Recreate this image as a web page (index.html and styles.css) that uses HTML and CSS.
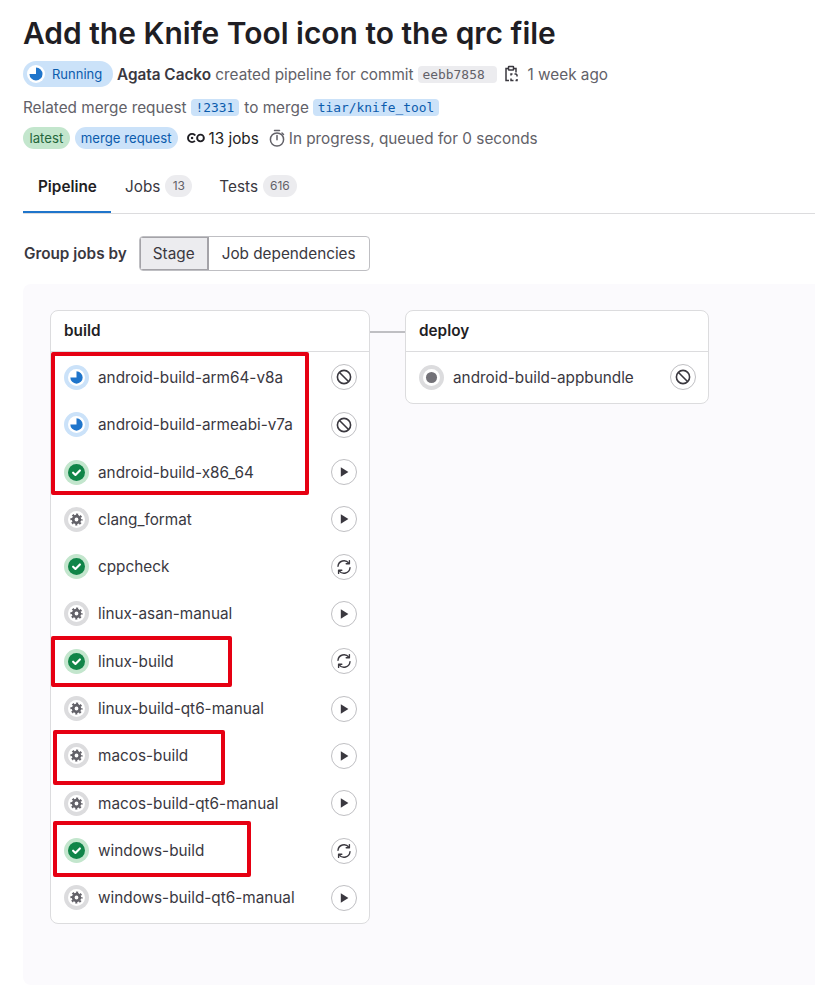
FILE: index.html
```html
<!DOCTYPE html>
<html lang="en">
<head>
<meta charset="utf-8">
<title>Pipeline</title>
<link rel="stylesheet" href="styles.css">
</head>
<body>
<svg class="defs" width="0" height="0" aria-hidden="true">
  <symbol id="s-running" viewBox="0 0 16 16"><circle cx="8" cy="8" r="8" fill="#fff"/><path d="M8 2.200a5.800 5.800 0 1 1-5.800 5.800H8z" fill="#1f75cb"/></symbol>
  <symbol id="s-success" viewBox="0 0 16 16"><circle cx="8" cy="8" r="8" fill="#108548"/><path d="M4.800 8.200l2.200 2.100 4.200-4.200" fill="none" stroke="#fff" stroke-width="2" stroke-linecap="round" stroke-linejoin="round"/></symbol>
  <symbol id="s-manual" viewBox="0 0 16 16"><circle cx="8" cy="8" r="8" fill="#fff"/><circle cx="8" cy="8" r="3.100" fill="#fff" stroke="#626168" stroke-width="2.600"/><circle cx="8" cy="8" r="4.900" fill="none" stroke="#626168" stroke-width="1.700" stroke-dasharray="1.924 1.924" stroke-dashoffset=".96"/></symbol>
  <symbol id="s-created" viewBox="0 0 16 16"><circle cx="8" cy="8" r="8" fill="#fff"/><circle cx="8" cy="8" r="5.200" fill="#737278"/></symbol>
  <symbol id="a-cancel" viewBox="0 0 16 16"><circle cx="8" cy="8" r="6.600" fill="none" stroke="#3a383f" stroke-width="1.600"/><path d="M3.500 3.500l9 9" stroke="#3a383f" stroke-width="1.600"/></symbol>
  <symbol id="a-play" viewBox="0 0 16 16"><path d="M4.800 3.200L12.400 8l-7.600 4.800z" fill="#3a383f"/></symbol>
  <symbol id="a-retry" viewBox="0 0 16 16"><path d="M2 7.200A6 6 0 0 1 12.800 4.200M14 8.800A6 6 0 0 1 3.200 11.800" fill="none" stroke="#3a383f" stroke-width="1.400" stroke-linecap="round"/><path d="M13.400 1.600v3.200h-3.200M2.600 14.400v-3.200h3.200" fill="none" stroke="#3a383f" stroke-width="1.400" stroke-linecap="round" stroke-linejoin="round"/></symbol>
</svg>

<main class="page">
  <h1 class="title">Add the Knife Tool icon to the qrc file</h1>

  <div class="meta-row meta-first">
    <span class="status-pill">
      <svg class="pill-icon"><use href="#s-running"/></svg>Running
    </span>
    <span class="muted"><strong class="author">Agata Cacko</strong> created pipeline for commit</span>
    <code class="sha">eebb7858</code>
    <svg class="clip" viewBox="0 0 16 18"><path d="M5.500 3.500H3v12h3M10.500 3.500H13v4" fill="none" stroke="#3a383f" stroke-width="1.500"/><rect x="5.500" y="1.500" width="5" height="3.500" rx=".5" fill="none" stroke="#3a383f" stroke-width="1.500"/><path d="M8 10.500V9h1.500M11.500 9H13l1 1v1.500M14 14v1.500h-1.500M10.500 15.500H8V13.500" fill="none" stroke="#3a383f" stroke-width="1.500"/></svg>
    <span class="muted time">1 week ago</span>
  </div>

  <div class="meta-row meta-second">
    <span class="muted">Related merge request</span>
    <code class="ref">!2331</code>
    <span class="muted">to merge</span>
    <code class="ref">tiar/knife_tool</code>
  </div>

  <div class="meta-row meta-third">
    <span class="tag tag-green">latest</span>
    <span class="tag tag-blue">merge request</span>
    <svg class="jobs-icon" viewBox="0 0 16 16"><circle cx="4.500" cy="8" r="3.600" fill="none" stroke="#1f1e24" stroke-width="1.700" stroke-dasharray="17 5.600" transform="rotate(45 4.500 8)"/><circle cx="12" cy="8" r="3" fill="none" stroke="#1f1e24" stroke-width="1.700"/><circle cx="4.500" cy="8" r="1.100" fill="#1f1e24"/></svg>
    <span class="jobs">13 jobs</span>
    <svg class="timer" viewBox="0 0 18 18"><circle cx="9" cy="10.500" r="6.600" fill="none" stroke="#626168" stroke-width="1.500"/><path d="M6.500 1.500h5M9 6.500v4.300" stroke="#626168" stroke-width="1.500" stroke-linecap="round"/><path d="M14 4l1.500 1.500" stroke="#626168" stroke-width="1.500" stroke-linecap="round"/></svg>
    <span class="muted">In progress, queued for 0 seconds</span>
  </div>

  <nav class="tabs">
    <a class="tab tab-active">Pipeline</a>
    <a class="tab">Jobs <span class="count">13</span></a>
    <a class="tab">Tests <span class="count">616</span></a>
  </nav>

  <div class="group-row">
    <span class="group-label">Group jobs by</span>
    <div class="seg">
      <span class="seg-btn seg-on">Stage</span>
      <span class="seg-btn">Job dependencies</span>
    </div>
  </div>

  <section class="graph">
    <div class="stage stage-build">
      <h2 class="stage-head">build</h2>
      <ul class="jobs-list">
        <li class="job"><span class="ring ring-blue"><svg class="st"><use href="#s-running"/></svg></span><span class="job-name">android-build-arm64-v8a</span><span class="act"><svg class="act-i"><use href="#a-cancel"/></svg></span></li>
        <li class="job"><span class="ring ring-blue"><svg class="st"><use href="#s-running"/></svg></span><span class="job-name">android-build-armeabi-v7a</span><span class="act"><svg class="act-i"><use href="#a-cancel"/></svg></span></li>
        <li class="job"><span class="ring ring-green"><svg class="st"><use href="#s-success"/></svg></span><span class="job-name">android-build-x86_64</span><span class="act"><svg class="act-i"><use href="#a-play"/></svg></span></li>
        <li class="job"><span class="ring ring-gray"><svg class="st"><use href="#s-manual"/></svg></span><span class="job-name">clang_format</span><span class="act"><svg class="act-i"><use href="#a-play"/></svg></span></li>
        <li class="job"><span class="ring ring-green"><svg class="st"><use href="#s-success"/></svg></span><span class="job-name">cppcheck</span><span class="act"><svg class="act-i"><use href="#a-retry"/></svg></span></li>
        <li class="job"><span class="ring ring-gray"><svg class="st"><use href="#s-manual"/></svg></span><span class="job-name">linux-asan-manual</span><span class="act"><svg class="act-i"><use href="#a-play"/></svg></span></li>
        <li class="job"><span class="ring ring-green"><svg class="st"><use href="#s-success"/></svg></span><span class="job-name">linux-build</span><span class="act"><svg class="act-i"><use href="#a-retry"/></svg></span></li>
        <li class="job"><span class="ring ring-gray"><svg class="st"><use href="#s-manual"/></svg></span><span class="job-name">linux-build-qt6-manual</span><span class="act"><svg class="act-i"><use href="#a-play"/></svg></span></li>
        <li class="job"><span class="ring ring-gray"><svg class="st"><use href="#s-manual"/></svg></span><span class="job-name">macos-build</span><span class="act"><svg class="act-i"><use href="#a-play"/></svg></span></li>
        <li class="job"><span class="ring ring-gray"><svg class="st"><use href="#s-manual"/></svg></span><span class="job-name">macos-build-qt6-manual</span><span class="act"><svg class="act-i"><use href="#a-play"/></svg></span></li>
        <li class="job"><span class="ring ring-green"><svg class="st"><use href="#s-success"/></svg></span><span class="job-name">windows-build</span><span class="act"><svg class="act-i"><use href="#a-retry"/></svg></span></li>
        <li class="job"><span class="ring ring-gray"><svg class="st"><use href="#s-manual"/></svg></span><span class="job-name">windows-build-qt6-manual</span><span class="act"><svg class="act-i"><use href="#a-play"/></svg></span></li>
      </ul>
    </div>
    <div class="connector"></div>
    <div class="stage stage-deploy">
      <h2 class="stage-head">deploy</h2>
      <ul class="jobs-list">
        <li class="job"><span class="ring ring-gray"><svg class="st"><use href="#s-created"/></svg></span><span class="job-name">android-build-appbundle</span><span class="act"><svg class="act-i"><use href="#a-cancel"/></svg></span></li>
      </ul>
    </div>
  </section>
</main>

<div class="mark mark-1"></div>
<div class="mark mark-2"></div>
<div class="mark mark-3"></div>
<div class="mark mark-4"></div>
</body>
</html>
```

FILE: styles.css
```css
html, body {
  margin: 0;
  padding: 0;
  background: #fff;
  overflow: hidden;
}
body {
  position: relative;
  width: 815px;
  height: 1004px;
  font-family: Inter, "Noto Sans", sans-serif;
  font-size: 15.3px;
  color: #3a383f;
}
.defs { position: absolute; }
.page { padding: 16px 0 0 23px; }
.title {
  margin: 0;
  font-size: 29.95px;
  line-height: 34px;
  font-weight: 600;
  color: #1f1e24;
}
.meta-row {
  display: flex;
  align-items: center;
  white-space: nowrap;
}
.meta-first { margin-top: 11px; height: 26px; }
.meta-second { margin-top: 8px; height: 24px; }
.meta-third { margin-top: 7px; height: 24px; }
.muted { color: #626168; }
.author { font-weight: 600; color: #3a383f; }
.status-pill {
  display: inline-flex;
  align-items: center;
  height: 26px;
  width: 90px;
  box-sizing: border-box;
  padding-left: 4px;
  margin-right: 4px;
  border-radius: 13px;
  background: #cbe2f9;
  color: #0b5cad;
  font-size: 13px;
}
.pill-icon {
  width: 18px;
  height: 18px;
  margin-right: 7px;
}
.sha {
  margin-left: 4px;
  width: 79px;
  height: 17px;
  line-height: 18px;
  box-sizing: border-box;
  padding-left: 5px;
  border-radius: 4px;
  background: #ececef;
  color: #626168;
  font-family: "DejaVu Sans Mono", monospace;
  font-size: 12.9px;
}
.clip { width: 16px; height: 18px; margin-left: 6px; }
.time { margin-left: 9px; }
.ref {
  margin: 0 5px 0 4px;
  height: 17px;
  line-height: 18px;
  padding: 0 5px;
  border-radius: 4px;
  background: #cbe2f9;
  color: #0b5cad;
  font-family: "DejaVu Sans Mono", monospace;
  font-size: 12.9px;
}
.tag {
  height: 22px;
  line-height: 23px;
  border-radius: 11px;
  font-size: 13.2px;
}
.tag-green { background: #c3e6cd; color: #24663b; margin-right: 5px; padding: 0 6.5px; }
.tag-blue { background: #cbe2f9; color: #0b5cad; margin-right: 9px; padding: 0 6px; }
.jobs-icon { width: 18px; height: 18px; margin-right: 4px; }
.jobs { color: #1f1e24; }
.timer { width: 18px; height: 18px; margin: 0 3px 0 9px; }
.tabs {
  display: flex;
  margin-top: 13px;
  height: 51px;
  box-sizing: border-box;
  border-bottom: 1px solid #dcdcde;
}
.tab {
  display: flex;
  align-items: center;
  gap: 5px;
  padding: 0 13px 4px 14px;
  height: 50px;
  box-sizing: border-box;
  color: #3a383f;
}
.tab-active {
  font-weight: 600;
  color: #1f1e24;
  box-shadow: inset 0 -2px 0 #1f75cb;
  width: 88px;
  padding: 0 0 4px 15px;
}
.count {
  min-width: 27px;
  height: 22px;
  line-height: 22px;
  padding: 0 7px;
  box-sizing: border-box;
  text-align: center;
  border-radius: 11px;
  background: #ececef;
  color: #626168;
  font-size: 12px;
}
.group-row {
  display: flex;
  align-items: center;
  margin-top: 22px;
  height: 34px;
}
.group-label {
  font-weight: 600;
  margin-right: 12px;
  color: #3a383f;
  margin-left: 1px;
}
.seg {
  display: flex;
  height: 35px;
  box-sizing: border-box;
  border: 1px solid #bfbfc3;
  border-radius: 4px;
  overflow: hidden;
}
.seg-btn {
  display: flex;
  align-items: center;
  padding: 0 13px;
}
.seg-on {
  width: 69px;
  box-sizing: border-box;
  justify-content: center;
  padding: 0;
  background: #ececef;
  box-shadow: inset 0 0 0 1px #a4a3a8;
  border-right: 1px solid #a4a3a8;
}
.graph {
  display: flex;
  align-items: flex-start;
  margin-top: 14px;
  height: 701px;
  box-sizing: border-box;
  padding: 26px 0 0 27px;
  border-radius: 8px 0 0 8px;
  background: #fbfafd;
}
.stage {
  box-sizing: border-box;
  background: #fff;
  border: 1px solid #dcdcde;
  border-radius: 8px;
}
.stage-build { width: 320px; height: 614px; }
.stage-deploy { width: 304px; height: 94px; }
.connector {
  width: 35px;
  height: 2px;
  margin-top: 21px;
  background: #bfbfc3;
}
.stage-head {
  margin: 0;
  height: 41px;
  line-height: 39px;
  box-sizing: border-box;
  padding-left: 13px;
  border-bottom: 1px solid #dcdcde;
  font-size: 15.3px;
  font-weight: 600;
  color: #1f1e24;
}
.jobs-list {
  list-style: none;
  margin: 1.7px 0 0;
  padding: 0;
}
.job {
  display: flex;
  align-items: center;
  height: 47.34px;
  padding: 0 12px 0 13px;
}
.ring {
  display: flex;
  align-items: center;
  justify-content: center;
  flex: none;
  width: 25px;
  height: 25px;
  border-radius: 50%;
}
.ring-blue { background: #cbe2f9; }
.ring-green { background: #c3e6cd; }
.ring-gray { background: #dcdcde; }
.st {
  width: 17px;
  height: 17px;
}
.job-name {
  flex: 1;
  margin-left: 9px;
  color: #3a383f;
  white-space: nowrap;
}
.act {
  display: flex;
  align-items: center;
  justify-content: center;
  flex: none;
  width: 26px;
  height: 26px;
  box-sizing: border-box;
  border: 1px solid #bfbfc3;
  border-radius: 50%;
  background: #fff;
}
.act-i { width: 16px; height: 16px; }
.mark {
  position: absolute;
  box-sizing: border-box;
  border: 4px solid #e60012;
  border-radius: 2px;
}
.mark-1 { left: 51px; top: 352px; width: 258px; height: 143px; }
.mark-2 { left: 51px; top: 636px; width: 181px; height: 51px; }
.mark-3 { left: 53px; top: 730px; width: 172px; height: 55px; }
.mark-4 { left: 53px; top: 821px; width: 198px; height: 56px; }
```
